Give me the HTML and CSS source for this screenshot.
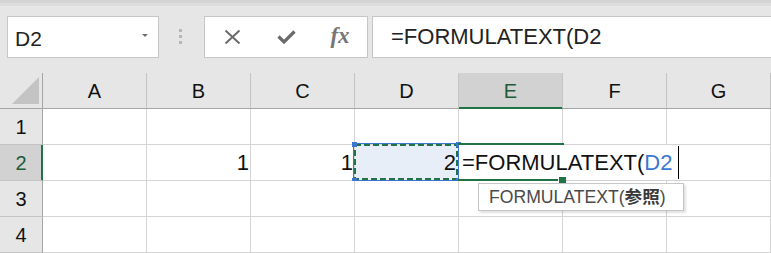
FILE: index.html
```html
<!DOCTYPE html>
<html>
  <head>
    <title>FORMULATEXT</title>
    <link rel="stylesheet" href="styles.css">
  </head>
  <body>
    <div class="strip"></div>

    <!-- Name box + formula bar -->
    <div class="formula-bar">
      <div class="name-box">
        <span>D2</span>
        <span class="drop"></span>
      </div>
      <div class="grip"><i></i><i></i><i></i></div>
      <div class="fx-box">
        <span class="fx-btn">
          <svg width="17" height="16" viewBox="0 0 17 16"><path d="M1.5 1.5 L15.5 14.5 M15.5 1.5 L1.5 14.5" stroke="#6b6b6b" stroke-width="2" fill="none"/></svg>
        </span>
        <span class="fx-btn">
          <svg width="19" height="14" viewBox="0 0 19 14"><path d="M1.5 6.5 L7 12 L17.5 1.5" stroke="#6b6b6b" stroke-width="3.2" fill="none"/></svg>
        </span>
        <span class="fx-btn fx">fx</span>
      </div>
      <div class="formula-input">=FORMULATEXT(D2</div>
    </div>

    <!-- Sheet -->
    <div class="sheet">
      <div class="hd corner">
        <svg width="42" height="35" viewBox="0 0 42 35"><polygon points="39,4 39,31 12,31" fill="#c4c4c4"/></svg>
      </div>
      <div class="hd col">A</div>
      <div class="hd col">B</div>
      <div class="hd col">C</div>
      <div class="hd col">D</div>
      <div class="hd col sel">E</div>
      <div class="hd col">F</div>
      <div class="hd col">G</div>

      <div class="hd rh">1</div>
      <div class="cell"></div><div class="cell"></div><div class="cell"></div><div class="cell"></div><div class="cell"></div><div class="cell"></div><div class="cell"></div>

      <div class="hd rh sel">2</div>
      <div class="cell"></div>
      <div class="cell num">1</div>
      <div class="cell num">1</div>
      <div class="cell num ref-cell">
        2
        <div class="marquee">
          <svg width="104" height="36" viewBox="0 0 104 36"><rect x="1" y="1" width="102" height="34" fill="none" stroke="#217346" stroke-width="2" stroke-dasharray="6 3"/></svg>
          <i class="knob tl"></i><i class="knob tr"></i><i class="knob bl"></i><i class="knob br"></i>
        </div>
      </div>
      <div class="cell active">
        <div class="editor">=FORMULATEXT(<span class="ref">D2</span><i class="caret"></i></div>
        <div class="frame"></div>
        <i class="fill-handle"></i>
        <div class="tip">FORMULATEXT(<b>参照</b>)</div>
      </div>
      <div class="cell"></div>
      <div class="cell"></div>

      <div class="hd rh">3</div>
      <div class="cell"></div><div class="cell"></div><div class="cell"></div><div class="cell"></div><div class="cell"></div><div class="cell"></div><div class="cell"></div>

      <div class="hd rh">4</div>
      <div class="cell"></div><div class="cell"></div><div class="cell"></div><div class="cell"></div><div class="cell"></div><div class="cell"></div><div class="cell"></div>
    </div>
  </body>
</html>
```

FILE: styles.css
```css
body {
  margin: 0;
  width: 771px;
  height: 253px;
  overflow: hidden;
  background-color: #e6e6e6;
  font-family: "Liberation Sans", "Noto Sans CJK JP", sans-serif;
  color: #222;
}

.strip {
  height: 3px;
  background-color: #d4d4d4;
  border-bottom: 3px solid #dddddd;
}

/* Formula bar */
.formula-bar {
  display: flex;
  align-items: flex-start;
  height: 67px;
  padding: 10px 0 0 7px;
  box-sizing: border-box;
}
.name-box {
  width: 152px;
  height: 42px;
  box-sizing: border-box;
  border: 1px solid #c6c6c6;
  background-color: white;
  display: flex;
  align-items: center;
  justify-content: space-between;
  padding: 3px 10px 0 7px;
  font-size: 21px;
}
.drop {
  width: 0;
  height: 0;
  border-left: 3px solid transparent;
  border-right: 3px solid transparent;
  border-top: 3px solid #707070;
  margin-top: -7px;
}
.grip {
  display: flex;
  flex-direction: column;
  gap: 3px;
  margin: 13px 22px 0 20px;
}
.grip i {
  width: 3px;
  height: 3px;
  background-color: #b6b6b6;
}
.fx-box {
  width: 164px;
  height: 42px;
  box-sizing: border-box;
  border: 1px solid #c6c6c6;
  background-color: white;
  display: flex;
  margin-right: 4px;
}
.fx-btn {
  width: 54px;
  display: flex;
  align-items: center;
  justify-content: center;
}
.fx {
  font-family: "Liberation Serif", serif;
  font-style: italic;
  font-weight: bold;
  font-size: 23px;
  color: #767676;
  padding-bottom: 2px;
}
.formula-input {
  flex: 1;
  height: 42px;
  box-sizing: border-box;
  border: 1px solid #c6c6c6;
  border-right: none;
  background-color: white;
  font-size: 22px;
  line-height: 40px;
  padding-left: 18px;
}

/* Sheet grid */
.sheet {
  display: grid;
  grid-template-columns: 43px repeat(6, 104px) 104px;
  grid-template-rows: 36px repeat(4, 36px);
}
.hd {
  background-color: #e6e6e6;
  box-sizing: border-box;
  display: flex;
  align-items: center;
  justify-content: center;
  font-size: 20px;
  color: #111;
}
.col {
  border-right: 1px solid #c4c4c4;
  border-bottom: 1px solid #a6a6a6;
  padding-top: 1px;
}
.corner {
  border-right: 1px solid #a6a6a6;
  border-bottom: 1px solid #a6a6a6;
}
.rh {
  border-right: 1px solid #a6a6a6;
  border-bottom: 1px solid #c4c4c4;
  padding-top: 1px;
}
.hd.sel {
  background-color: #d2d2d2;
  color: #1d5b39;
}
.col.sel {
  border-bottom-color: #217346;
  box-shadow: inset 0 -1px #217346;
}
.rh.sel {
  border-right-color: #217346;
  box-shadow: inset -1px 0 #217346;
}

.cell {
  position: relative;
  background-color: white;
  box-sizing: border-box;
  border-right: 1px solid #d4d4d4;
  border-bottom: 1px solid #d4d4d4;
  font-size: 22px;
  color: #111;
}
.num {
  text-align: right;
  line-height: 36px;
  padding-right: 1px;
}
.ref-cell {
  background-color: #e8eef8;
  padding-right: 2px;
}

/* Copy marquee on D2 */
.marquee {
  position: absolute;
  left: -2px;
  top: -2px;
  width: 106px;
  height: 38px;
  box-sizing: border-box;
  border: 1px solid #3b77d1;
}
.marquee svg {
  display: block;
}
.knob {
  position: absolute;
  width: 5px;
  height: 5px;
  background-color: #3b77d1;
}
.knob.tl { left: -2px; top: -2px; }
.knob.tr { right: -3px; top: -2px; }
.knob.bl { left: -2px; bottom: -3px; }
.knob.br { right: -3px; bottom: -3px; }

/* In-cell editing on E2 */
.editor {
  position: absolute;
  left: 0;
  top: 0;
  width: 220px;
  height: 35px;
  background-color: white;
  padding-left: 3px;
  box-sizing: border-box;
  line-height: 36px;
  white-space: nowrap;
  z-index: 1;
}
.ref {
  color: #3b78d4;
}
.caret {
  position: absolute;
  right: 0;
  top: 1px;
  width: 1px;
  height: 33px;
  background-color: black;
}
.frame {
  position: absolute;
  left: -1px;
  top: -2px;
  width: 106px;
  height: 38px;
  box-sizing: border-box;
  border-top: 2px solid #217346;
  border-bottom: 2px solid #217346;
  z-index: 2;
}
.fill-handle {
  position: absolute;
  left: 99px;
  top: 32px;
  width: 7px;
  height: 6px;
  background-color: #217346;
  border-left: 1px solid white;
  z-index: 3;
}
.tip {
  position: absolute;
  left: 19px;
  top: 38px;
  width: 206px;
  height: 28px;
  box-sizing: border-box;
  background-color: white;
  border: 1px solid #c6c6c6;
  box-shadow: 2px 2px 2px rgba(0, 0, 0, 0.12);
  font-size: 17.6px;
  line-height: 26px;
  color: #4a4a4a;
  padding-left: 10px;
  white-space: nowrap;
  z-index: 4;
}
.tip b {
  color: #3a3a3a;
}
```
